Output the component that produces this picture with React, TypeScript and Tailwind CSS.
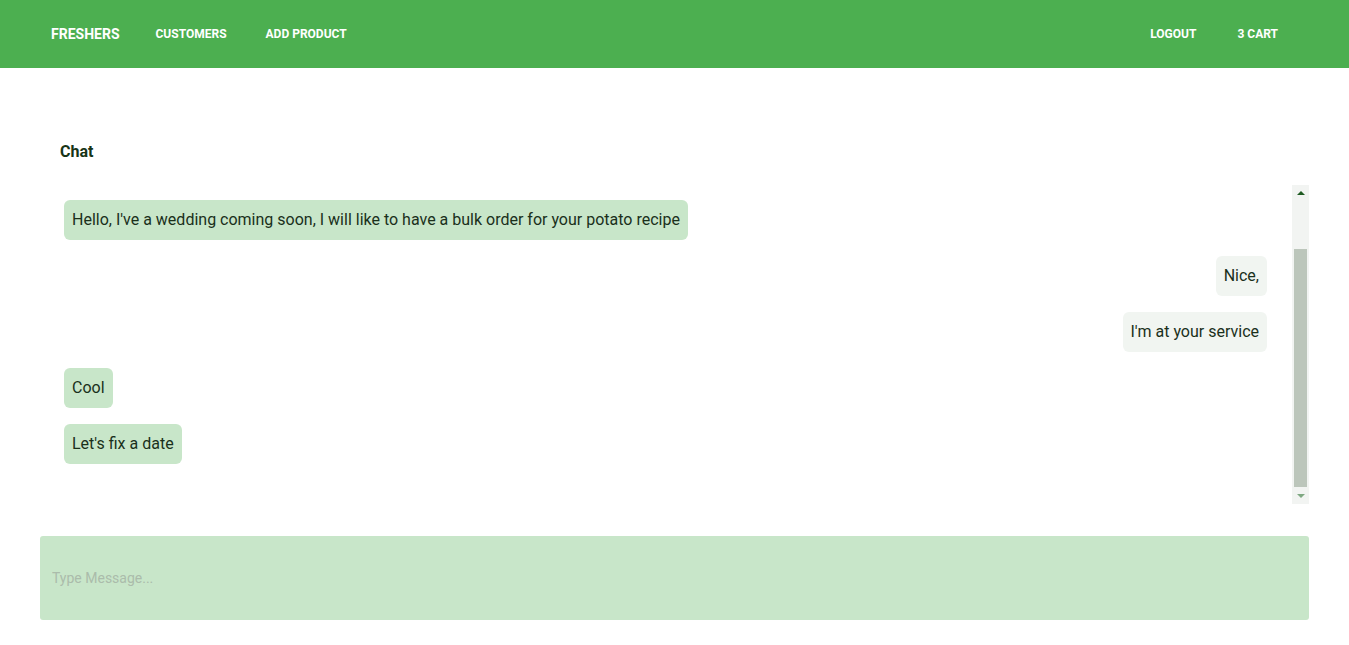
const messages = [
  { text: "Hello, I've a wedding coming soon, I will like to have a bulk order for your potato recipe", mine: false },
  { text: "Nice,", mine: true },
  { text: "I'm at your service", mine: true },
  { text: "Cool", mine: false },
  { text: "Let's fix a date", mine: false },
];

function Navbar() {
  return (
    <header className="flex h-[68px] w-full items-center justify-between bg-[#4caf50] px-[51px] text-[12px] font-bold uppercase text-white">
      <nav className="flex items-center">
        <a href="#" className="text-[14px]">Freshers</a>
        <a href="#" className="ml-[36px]">Customers</a>
        <a href="#" className="ml-[39px]">Add Product</a>
      </nav>
      <div className="mr-[20px] flex items-center gap-[41px]">
        <a href="#">Logout</a>
        <a href="#">3 Cart</a>
      </div>
    </header>
  );
}

function Scrollbar() {
  return (
    <div className="flex w-[17px] shrink-0 flex-col bg-[#f2f4f2]">
      <div className="flex h-[12px] items-center justify-center pt-[4px]">
        <div className="h-0 w-0 border-x-[4px] border-b-[4px] border-x-transparent border-b-[#1f5b22]" />
      </div>
      <div className="h-[52px]" />
      <div className="mx-[2px] h-[238px] bg-[#bcc6bb]" />
      <div className="flex h-[17px] items-center justify-center">
        <div className="h-0 w-0 border-x-[4px] border-t-[4px] border-x-transparent border-t-[#7fa882]" />
      </div>
    </div>
  );
}

export default function App() {
  return (
    <div className="min-h-screen bg-white font-['Roboto',sans-serif]">
      <Navbar />
      <main className="px-[40px] pt-[72px]">
        <h2 className="pl-[20px] text-[16px] font-bold text-[#173417]">Chat</h2>
        <div className="mt-[21px] flex h-[319px]">
          <div className="flex flex-1 flex-col gap-[16px] overflow-hidden pl-[24px] pr-[25px] pt-[15px]">
            {messages.map((m, i) => (
              <div key={i} className={m.mine ? "flex justify-end" : "flex justify-start"}>
                <div
                  className={
                    "h-[40px] rounded-[6px] px-[8px] py-[8px] text-[16px] leading-[24px] text-[#1a301b] " +
                    (m.mine ? "bg-[#f1f5f1]" : "bg-[#c8e6c9]")
                  }
                >
                  {m.text}
                </div>
              </div>
            ))}
          </div>
          <Scrollbar />
        </div>
        <div className="mt-[32px]">
          <input
            type="text"
            placeholder="Type Message..."
            className="h-[84px] w-full rounded-[3px] bg-[#c8e6c9] px-[12px] text-[14px] text-[#1a301b] outline-none placeholder:text-[#abbcab]"
          />
        </div>
      </main>
    </div>
  );
}
